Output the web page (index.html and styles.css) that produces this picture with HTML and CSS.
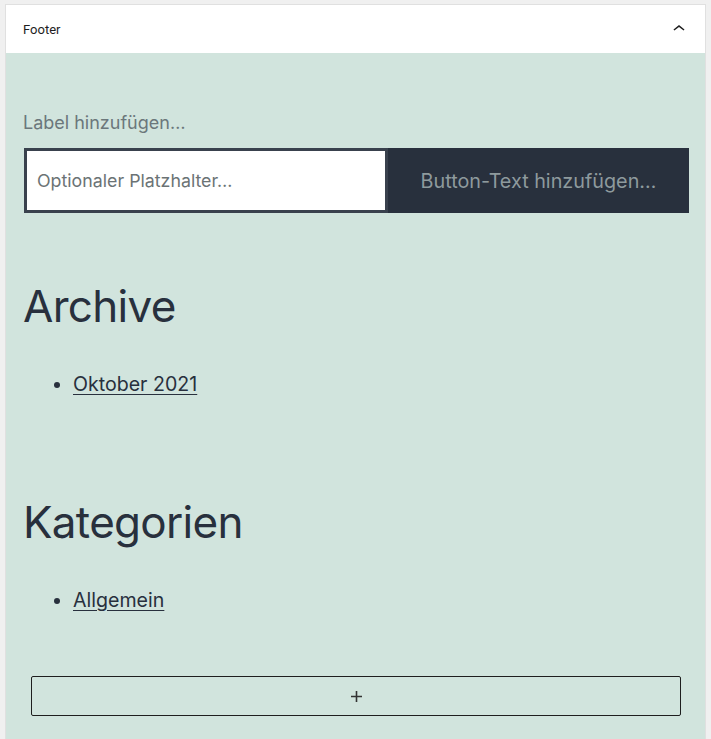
FILE: index.html
```html
<!DOCTYPE html>
<html lang="de">
<head>
<meta charset="utf-8">
<title>Footer</title>
<link rel="stylesheet" href="styles.css">
</head>
<body>
<div class="panel">
  <div class="panel-header">
    <span class="panel-title">Footer</span>
    <svg class="chevron" width="24" height="24" viewBox="0 0 24 24"><path d="M6.5 12.4L12 8l5.5 4.4-.9 1.2L12 10l-4.6 3.6-1-1.2z"/></svg>
  </div>
  <div class="panel-body">
    <div class="search-label">Label hinzufügen…</div>
    <div class="search-row">
      <div class="search-input">Optionaler Platzhalter…</div>
      <div class="search-button">Button-Text hinzufügen…</div>
    </div>
    <h2 class="widget-title archive-title">Archive</h2>
    <ul class="widget-list">
      <li><a href="#">Oktober 2021</a></li>
    </ul>
    <h2 class="widget-title cat-title">Kategorien</h2>
    <ul class="widget-list">
      <li><a href="#">Allgemein</a></li>
    </ul>
    <div class="add-block">
      <svg width="13" height="13" viewBox="0 0 13 13"><path d="M6.5 1v11M1 6.5h11" stroke="#333" stroke-width="1.6" fill="none"/></svg>
    </div>
  </div>
</div>
</body>
</html>
```
FILE: styles.css
```css
html, body {
  margin: 0;
  padding: 0;
}
body {
  background: #f0f0f0;
  padding: 4px 5px 0 5px;
  font-family: Inter, "Noto Sans", sans-serif;
  color: #28303d;
}
.panel {
  width: 699px;
  border: 1px solid #e0e0e0;
  border-bottom: none;
  background: #d1e4dd;
  height: 735px;
}
.panel-header {
  height: 48px;
  background: #fff;
  display: flex;
  align-items: center;
  justify-content: space-between;
  padding: 0 16px 0 17px;
}
.panel-title {
  font-family: Roboto, Inter, sans-serif;
  font-size: 13px;
  color: #1e1e1e;
}
.chevron {
  fill: #1e1e1e;
  margin-right: -2px;
}
.panel-body {
  padding: 0 16px 0 17px;
  display: flex;
  flex-direction: column;
}
.search-label {
  margin-top: 58px;
  font-size: 18px;
  line-height: 24px;
  color: #6b777b;
}
.search-row {
  margin-top: 13px;
  margin-left: 1px;
  display: flex;
  height: 65px;
}
.search-input {
  border: 3px solid #39414d;
  background: #fff;
  display: flex;
  align-items: center;
  padding-left: 10px;
  font-size: 17.8px;
  color: #6b7375;
  box-sizing: border-box;
  width: 364px;
}
.search-button {
  flex: 1;
  background: #28303d;
  color: #8e9a9d;
  font-size: 19.8px;
  display: flex;
  align-items: center;
  justify-content: center;
}
.widget-title {
  margin: 0;
  font-weight: 400;
  font-size: 44px;
  line-height: 54px;
  letter-spacing: -0.7px;
  color: #28303d;
}
.archive-title { margin-top: 66px; }
.cat-title { margin-top: 97px; }
.widget-list {
  margin: 38px 0 0 0;
  padding-left: 50px;
  font-size: 19.6px;
  line-height: 27px;
}
.widget-list a {
  color: #28303d;
  text-decoration: underline;
  text-underline-offset: 3px;
}
.add-block {
  margin: 62px 8px 0 8px;
  height: 40px;
  border: 1px solid #1e1e1e;
  box-sizing: border-box;
  border-radius: 2px;
  display: flex;
  align-items: center;
  justify-content: center;
}
```
